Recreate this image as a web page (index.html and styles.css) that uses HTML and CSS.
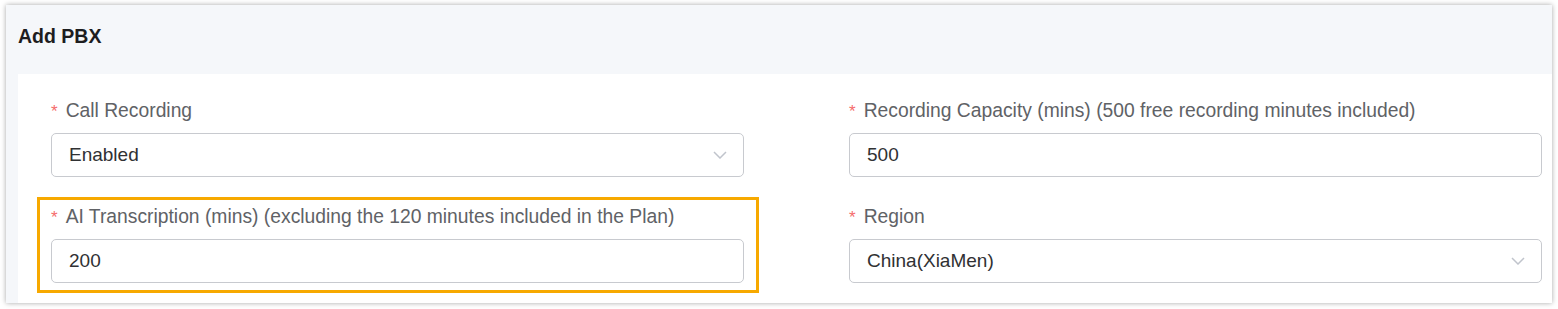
FILE: index.html
```html
<!DOCTYPE html>
<html>
<head>
<meta charset="utf-8">
<link rel="stylesheet" href="styles.css">
</head>
<body>
<div class="card">
  <div class="card-header">Add PBX</div>
  <div class="card-body">
    <div class="form-grid">
      <div class="field">
        <div class="label"><span class="req">*</span>Call Recording</div>
        <div class="control">
          <span class="value">Enabled</span>
          <svg class="chev" width="14" height="8" viewBox="0 0 14 8"><path d="M1 1 L7 7 L13 1" fill="none" stroke="#c0c4cc" stroke-width="1.5"/></svg>
        </div>
      </div>
      <div class="field">
        <div class="label"><span class="req">*</span>Recording Capacity (mins) (500 free recording minutes included)</div>
        <div class="control"><span class="value">500</span></div>
      </div>
      <div class="field highlight">
        <div class="label"><span class="req">*</span>AI Transcription (mins) (excluding the 120 minutes included in the Plan)</div>
        <div class="control"><span class="value">200</span></div>
      </div>
      <div class="field">
        <div class="label"><span class="req">*</span>Region</div>
        <div class="control">
          <span class="value">China(XiaMen)</span>
          <svg class="chev" width="14" height="8" viewBox="0 0 14 8"><path d="M1 1 L7 7 L13 1" fill="none" stroke="#c0c4cc" stroke-width="1.5"/></svg>
        </div>
      </div>
    </div>
  </div>
</div>
</body>
</html>
```
FILE: styles.css
```css
html, body {
  margin: 0;
  padding: 0;
  background: #ffffff;
}
body {
  font-family: "Liberation Sans", Arial, sans-serif;
  width: 1558px;
  height: 309px;
  overflow: hidden;
}
.card {
  margin: 5px 0 0 6px;
  width: 1546px;
  height: 298px;
  background: #f5f7fa;
  box-shadow: 0 0 5px rgba(0, 0, 0, 0.35);
  display: flex;
  flex-direction: column;
}
.card-header {
  height: 69px;
  box-sizing: border-box;
  padding: 19px 0 0 12px;
  font-size: 19.5px;
  line-height: 24px;
  font-weight: bold;
  color: #1d1d1f;
}
.card-body {
  flex: 1;
  margin-left: 12px;
  background: #ffffff;
  padding: 25px 0 0 33px;
}
.form-grid {
  display: grid;
  grid-template-columns: 693px 693px;
  column-gap: 105px;
  row-gap: 28px;
}
.field {
  display: flex;
  flex-direction: column;
  gap: 10px;
}
.label {
  height: 24px;
  font-size: 19.3px;
  line-height: 24px;
  color: #606266;
  white-space: nowrap;
}
.req {
  color: #f56c6c;
  font-size: 17px;
  line-height: 0;
  margin-right: 8px;
}
.control {
  height: 44px;
  flex: none;
  box-sizing: border-box;
  border: 1px solid #c8cacf;
  border-radius: 5px;
  padding: 0 15px 0 17px;
  display: flex;
  align-items: center;
  justify-content: space-between;
}
.value {
  font-size: 19px;
  color: #303133;
}
.chev {
  display: block;
  margin-right: 1px;
}
.highlight {
  position: relative;
}
.highlight::after {
  content: "";
  position: absolute;
  left: -14px;
  top: -8px;
  right: -15px;
  bottom: -10px;
  border: 3px solid #f7a900;
  pointer-events: none;
}
```
